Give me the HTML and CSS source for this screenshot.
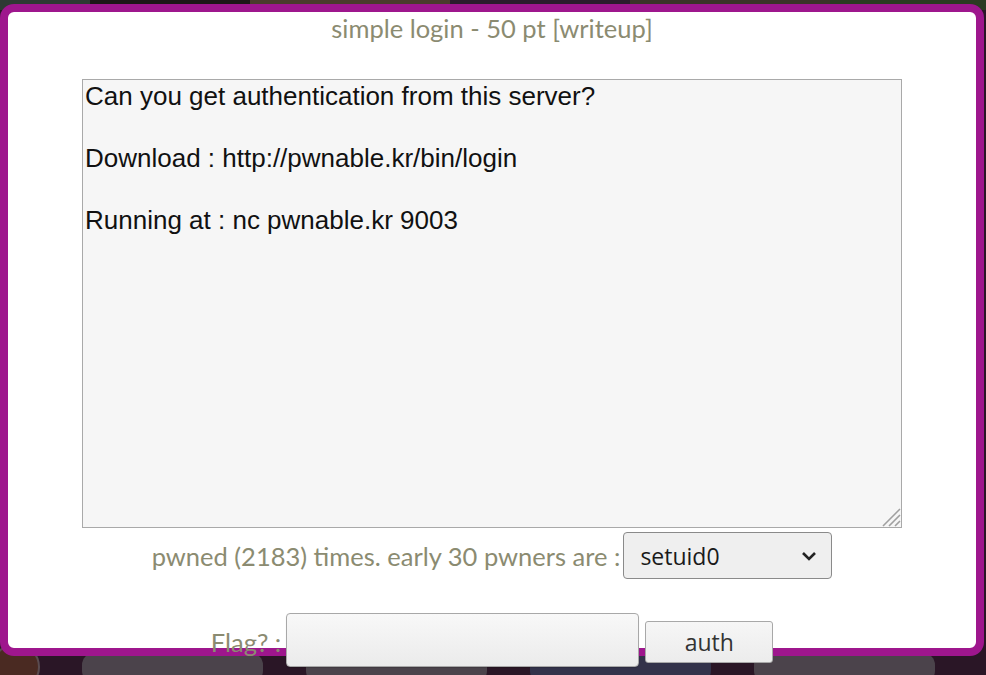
FILE: index.html
```html
<!DOCTYPE html>
<html>
<head>
<meta charset="utf-8">
<link rel="stylesheet" href="styles.css">
</head>
<body>
<div class="backdrop">
  <div class="strip-top">
    <span class="tile t1"></span><span class="tile t2"></span><span class="tile t3"></span><span class="tile t4"></span><span class="tile t5"></span><span class="tile t6"></span>
  </div>
  <div class="strip-bottom">
    <span class="avatar"></span>
    <span class="card first"></span><span class="card"></span><span class="card dark"></span><span class="card"></span>
  </div>
</div>

<div class="modal">
  <div class="title">simple login - 50 pt [writeup]</div>
  <div class="desc-wrap">
    <textarea class="desc" readonly>Can you get authentication from this server?

Download : http://pwnable.kr/bin/login

Running at : nc pwnable.kr 9003</textarea>
    <svg class="grip" width="24" height="24" viewBox="0 0 24 24"><path d="M23 6 L6 23 M23 12 L12 23 M23 18 L18 23" stroke="#a0a0a0" stroke-width="1.6" fill="none"/></svg>
  </div>
  <div class="pwned">
    <span class="label">pwned (2183) times. early 30 pwners are :</span>
    <span class="select-wrap">
      <select class="select"><option>setuid0</option></select>
      <svg class="chev" width="16" height="10" viewBox="0 0 16 10"><path d="M2 2 L8 8 L14 2" fill="none" stroke="#222" stroke-width="2.6"/></svg>
    </span>
  </div>
  <div class="flag">
    <span class="label">Flag? :</span>
    <input class="flag-input" type="text">
    <button class="auth">auth</button>
  </div>
</div>
</body>
</html>
```

FILE: styles.css
```css
html, body {
  margin: 0;
  padding: 0;
  width: 986px;
  height: 675px;
  overflow: hidden;
  background: #2a1626;
}

.backdrop {
  position: absolute;
  inset: 0;
  display: flex;
  flex-direction: column;
  justify-content: space-between;
}

.strip-top {
  height: 10px;
  display: flex;
  background: #3a3a2e;
}
.tile { display: block; height: 100%; }
.t1 { width: 90px; background: #2d3a33; }
.t2 { width: 160px; background: #1c1717; }
.t3 { width: 200px; background: #4a3b2c; }
.t4 { width: 180px; background: #2a1c2c; }
.t5 { width: 200px; background: #3b3328; }
.t6 { flex: 1; background: #2b3b22; }

.strip-bottom {
  height: 22px;
  display: flex;
  align-items: flex-start;
  gap: 43px;
  padding-top: 10px;
  background: #2a1626;
  position: relative;
}
.avatar {
  position: absolute;
  left: -8px;
  top: 0;
  width: 44px;
  height: 44px;
  border-radius: 50%;
  background: #4a2a22;
  border: 2px solid #5a4c50;
}
.card {
  display: block;
  width: 181px;
  height: 30px;
  border-radius: 12px;
  background: #4b434b;
}
.card.first { margin-left: 82px; }
.card.dark { background: #33324a; }

.modal {
  position: absolute;
  left: 0;
  top: 4px;
  width: 968px;
  height: 636px;
  border: 8px solid #9e168d;
  border-radius: 14px;
  background: #ffffff;
  text-align: center;
  font-family: Lato, "Open Sans", sans-serif;
  color: #8b8b71;
}

.title {
  font-size: 25.5px;
  line-height: 30px;
  padding-top: 1px;
  height: 66px;
}

.desc-wrap {
  position: relative;
  width: 820px;
  height: 449px;
  margin: 0 auto;
}
.desc {
  display: block;
  box-sizing: border-box;
  width: 820px;
  height: 449px;
  margin: 0;
  padding: 1px 3px 1px 2px;
  border: 1px solid #a9a9a9;
  background: #f6f6f6;
  font-family: "Liberation Sans", Arial, sans-serif;
  font-size: 26px;
  line-height: 31px;
  color: #111;
  text-align: left;
  outline: none;
  resize: none;
}
.grip {
  position: absolute;
  right: 1px;
  bottom: 1px;
}

.pwned {
  margin-top: 4px;
  font-size: 25.5px;
  height: 47px;
  display: flex;
  align-items: center;
  justify-content: center;
  gap: 3px;
}
.label { white-space: nowrap; }

.select-wrap {
  position: relative;
  display: inline-block;
}
.select {
  appearance: none;
  -webkit-appearance: none;
  box-sizing: border-box;
  width: 209px;
  height: 47px;
  padding: 0 0 0 16px;
  border: 1px solid #8a8a8a;
  border-radius: 4px;
  background: #efefef;
  font-family: "Open Sans", sans-serif;
  font-size: 23px;
  color: #1a1a1a;
}
.chev {
  position: absolute;
  right: 15px;
  top: 19px;
  pointer-events: none;
}

.flag {
  margin-top: 34px;
  display: flex;
  align-items: center;
  justify-content: center;
  font-size: 25.5px;
  height: 54px;
}
.flag .label {
  margin-right: 5px;
  padding-top: 4px;
}
.flag-input {
  box-sizing: border-box;
  width: 353px;
  height: 54px;
  border: 1px solid #a8a8a8;
  border-radius: 4px;
  background: linear-gradient(#f8f8f8, #ebebeb);
  box-shadow: 0 1px 1px rgba(0,0,0,0.15);
}
.auth {
  box-sizing: border-box;
  margin-left: 6px;
  margin-top: 4px;
  width: 128px;
  height: 42px;
  border: 1px solid #a8a8a8;
  border-radius: 3px;
  background: linear-gradient(#f6f6f6, #ececec);
  font-family: "Open Sans", sans-serif;
  font-size: 23px;
  color: #333;
  padding: 0;
}
```
